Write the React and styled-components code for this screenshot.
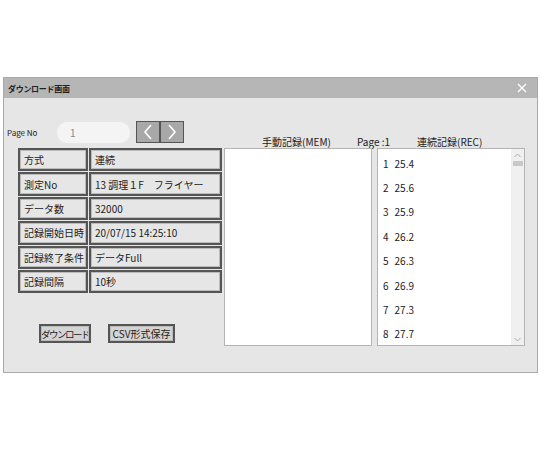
import React from "react";
import styled, { createGlobalStyle } from "styled-components";

const GlobalStyle = createGlobalStyle`
  html, body {
    margin: 0;
    padding: 0;
    background: #ffffff;
  }
  body {
    font-family: "Noto Sans CJK JP", "Noto Sans", sans-serif;
    color: #222;
  }
`;

const info = [
  ["方式", "連続"],
  ["測定No", "13 調理１F　フライヤー"],
  ["データ数", "32000"],
  ["記録開始日時", "20/07/15 14:25:10"],
  ["記録終了条件", "データFull"],
  ["記録間隔", "10秒"],
];

const records = [
  [1, "25.4"],
  [2, "25.6"],
  [3, "25.9"],
  [4, "26.2"],
  [5, "26.3"],
  [6, "26.9"],
  [7, "27.3"],
  [8, "27.7"],
];

function App() {
  return (
    <Page>
      <GlobalStyle />
      <Window>
        <TitleBar>
          <Title>ダウンロード画面</Title>
          <Close>
            <svg width="10" height="10" viewBox="0 0 10 10">
              <path d="M1 1 L9 9 M9 1 L1 9" stroke="#fff" strokeWidth="1.3" />
            </svg>
          </Close>
        </TitleBar>
        <Body>
          <LeftPane>
            <PageRow>
              <PageLabel>Page No</PageLabel>
              <PageInput>1</PageInput>
              <NavButton>
                <svg width="12" height="16" viewBox="0 0 12 16">
                  <path d="M9 1 L3 8 L9 15" stroke="#fff" strokeWidth="1.6" fill="none" />
                </svg>
              </NavButton>
              <NavButton>
                <svg width="12" height="16" viewBox="0 0 12 16">
                  <path d="M3 1 L9 8 L3 15" stroke="#fff" strokeWidth="1.6" fill="none" />
                </svg>
              </NavButton>
            </PageRow>
            <InfoTable>
              {info.map(([k, v]) => (
                <React.Fragment key={k}>
                  <Cell>{k}</Cell>
                  <Cell>{v}</Cell>
                </React.Fragment>
              ))}
            </InfoTable>
            <ButtonRow>
              <ActionButton $w={52} $fs={9.5} $ls={-1.5}>ダウンロード</ActionButton>
              <ActionButton $w={67} $fs={10} $ls={0}>CSV形式保存</ActionButton>
            </ButtonRow>
          </LeftPane>
          <RightPane>
            <Headers>
              <HeadLabel $w={133} $pad={38}>手動記録(MEM)</HeadLabel>
              <HeadLabel $w={60} $pad={0}>Page :1</HeadLabel>
              <HeadLabel $w={100} $pad={0}>連続記録(REC)</HeadLabel>
            </Headers>
            <Lists>
              <ListBox />
              <ListBox>
                <Items>
                  {records.map(([n, v]) => (
                    <Item key={n}>
                      <span>{n}</span>
                      <span>{v}</span>
                    </Item>
                  ))}
                </Items>
                <Scrollbar>
                  <svg width="7" height="5" viewBox="0 0 7 5">
                    <path d="M0.5 4 L3.5 1 L6.5 4" stroke="#aaa" fill="none" />
                  </svg>
                  <Thumb />
                  <Spacer />
                  <svg width="7" height="5" viewBox="0 0 7 5">
                    <path d="M0.5 1 L3.5 4 L6.5 1" stroke="#aaa" fill="none" />
                  </svg>
                </Scrollbar>
              </ListBox>
            </Lists>
          </RightPane>
        </Body>
      </Window>
    </Page>
  );
}

export default App;

const Page = styled.div`
  width: 540px;
  height: 450px;
  padding: 77px 0 0 3px;
  box-sizing: border-box;
`;

const Window = styled.div`
  width: 535px;
  height: 296px;
  box-sizing: border-box;
  border: 1px solid #a9a9a9;
  background: #e6e6e6;
  display: flex;
  flex-direction: column;
`;

const TitleBar = styled.div`
  height: 20px;
  background: #b6b6b6;
  display: flex;
  align-items: center;
  justify-content: space-between;
  padding: 0 10px 0 4px;
`;

const Title = styled.div`
  font-size: 8px;
  font-weight: bold;
  color: #222;
  letter-spacing: -0.3px;
`;

const Close = styled.div`
  display: flex;
  align-items: center;
`;

const Body = styled.div`
  flex: 1;
  display: flex;
  padding: 0 0 0 3px;
`;

const LeftPane = styled.div`
  width: 218px;
  display: flex;
  flex-direction: column;
`;

const PageRow = styled.div`
  display: flex;
  align-items: center;
  margin-top: 23px;
  height: 22px;
`;

const PageLabel = styled.div`
  font-size: 8px;
  width: 50px;
`;

const PageInput = styled.div`
  width: 60px;
  height: 21px;
  border-radius: 10px;
  background: #f4f4f4;
  color: #888;
  font-size: 10px;
  display: flex;
  align-items: center;
  padding-left: 13px;
  margin-right: 6px;
`;

const NavButton = styled.div`
  width: 22px;
  height: 20px;
  background: #a8a8a8;
  border: 1px solid #555;
  display: flex;
  align-items: center;
  justify-content: center;
`;

const InfoTable = styled.div`
  margin: 5px 0 0 11px;
  display: grid;
  grid-template-columns: 71px 134px;
  grid-auto-rows: 24.4px;
`;

const Cell = styled.div`
  border: 2px solid #555;
  outline: 1px solid #bbb;
  outline-offset: -3px;
  display: flex;
  align-items: center;
  padding-left: 4px;
  font-size: 10px;
  color: #222;
  white-space: nowrap;
  margin: 0 1px 1px 0;
`;

const ButtonRow = styled.div`
  display: flex;
  gap: 17px;
  margin: 30px 0 0 32px;
`;

const ActionButton = styled.div`
  width: ${(p) => p.$w}px;
  font-size: ${(p) => p.$fs}px;
  height: 19px;
  box-sizing: border-box;
  border: 2px solid #555;
  outline: 1px solid #bbb;
  outline-offset: -3px;
  background: #d4d4d4;
  display: flex;
  align-items: center;
  justify-content: center;
  white-space: nowrap;
  letter-spacing: ${(p) => p.$ls}px;
`;

const RightPane = styled.div`
  display: flex;
  flex-direction: column;
  margin-left: -1px;
`;

const Headers = styled.div`
  display: flex;
  align-items: center;
  height: 16px;
  margin-top: 35px;
  font-size: 10px;
`;

const HeadLabel = styled.div`
  width: ${(p) => p.$w}px;
  padding-left: ${(p) => p.$pad}px;
  box-sizing: border-box;
  white-space: nowrap;
`;

const Lists = styled.div`
  display: flex;
  gap: 5px;
  margin-top: -1px;
`;

const ListBox = styled.div`
  width: 148px;
  height: 198px;
  box-sizing: border-box;
  background: #fff;
  border: 1px solid #b4b4b4;
  display: flex;
`;

const Items = styled.div`
  flex: 1;
  padding: 2px 0 0 5px;
`;

const Item = styled.div`
  height: 24.4px;
  display: flex;
  align-items: center;
  gap: 6px;
  font-size: 10px;
  color: #222;
`;

const Scrollbar = styled.div`
  width: 13px;
  background: #f0f0f0;
  display: flex;
  flex-direction: column;
  align-items: center;
  padding: 4px 0 3px;
`;

const Thumb = styled.div`
  width: 10px;
  height: 5px;
  background: #c8c8c8;
  margin-top: 3px;
`;

const Spacer = styled.div`
  flex: 1;
`;
